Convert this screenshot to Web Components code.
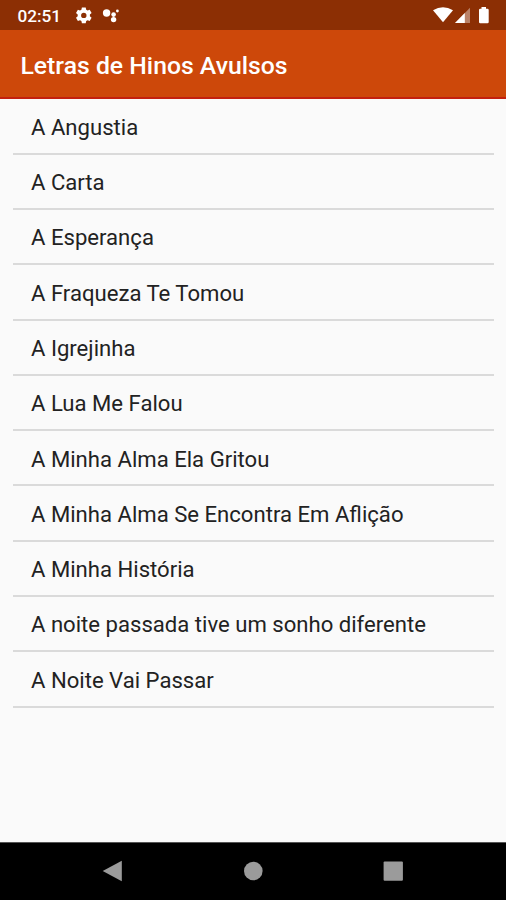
<!DOCTYPE html>
<html lang="pt">
<head>
<meta charset="utf-8">
<title>Letras de Hinos Avulsos</title>
<style>
html, body { margin: 0; height: 100%; }
body { font-family: Roboto, "Liberation Sans", sans-serif; background: #fafafa; overflow: hidden; }
</style>
</head>
<body>
<hymn-app></hymn-app>
<script>
const define = (name, html, setup) => customElements.define(name, class extends HTMLElement {
  constructor() {
    super();
    this.attachShadow({ mode: 'open' }).innerHTML = html;
    if (setup) setup(this.shadowRoot);
  }
});

define('status-bar', `
<style>
:host { display: flex; justify-content: space-between; height: 30px; box-sizing: border-box; background: #8c2f04; color: #fff; }
.group { display: flex; align-items: center; }
.left { padding-left: 17.5px; }
.right { padding-right: 15px; }
time { font-size: 17.2px; line-height: 30px; font-weight: 500; width: 44px; margin-right: 13.5px; white-space: nowrap; padding-top: 2px; }
svg { display: block; fill: #fff; }
</style>
<div class="group left"><time>02:51</time>
<svg width="50" height="30" viewBox="75 0 50 30">
<path fill-rule="evenodd" d="M81.9 7.5h3.8l.5 2.2 1.4.8 2.1-.7 1.9 3.3-1.7 1.5v1.7l1.7 1.5-1.9 3.2-2.1-.7-1.4.8-.5 2.1h-3.8l-.5-2.1-1.4-.8-2.1.7-1.9-3.2 1.7-1.5v-1.7l-1.7-1.5 1.9-3.3 2.1.7 1.4-.8zM83.8 12.7a2.7 2.7 0 1 0 0 5.4 2.7 2.7 0 0 0 0-5.4z"/>
<circle cx="106.6" cy="13" r="3.7"/><circle cx="113.6" cy="14.6" r="2.3"/><circle cx="113.6" cy="19.6" r="2.7"/><circle cx="117.4" cy="11" r="1.4"/>
</svg></div>
<div class="group right"><svg width="60" height="30" viewBox="431 0 60 30">
<path d="M433 10.3Q443 4.2 453 10.3L443 22.3z"/>
<path opacity=".4" d="M470 7.8V23H455z"/><path d="M464.8 13.1V23H455z"/>
<path d="M481.5 7h4.5v1.8h1.5q1.2 0 1.2 1.2v12q0 1.3-1.2 1.3h-7.3q-1.2 0-1.2-1.3V10q0-1.2 1.2-1.2h1.3z"/>
</svg></div>`);

define('app-bar', `
<style>
:host { display: flex; align-items: center; height: 69px; box-sizing: border-box; padding: 4px 20.5px 0; background: #cd480a; border-bottom: 2px solid #c3200f; color: #fff; }
h1 { margin: 0; font-size: 24.75px; line-height: 30px; font-weight: 500; white-space: nowrap; }
</style><h1><slot></slot></h1>`);

define('hymn-item', `
<style>
:host { display: flex; align-items: center; height: 55.3px; box-sizing: border-box; border-bottom: 2px solid #dadada; padding: 1.5px 18.5px 0; color: #222; font-size: 22.12px; white-space: nowrap; }
</style><span><slot></slot></span>`);

define('nav-bar', `
<style>
:host { display: flex; justify-content: space-around; align-items: center; height: 58px; box-sizing: border-box; background: #000; border-top: 1px solid #555; padding: 0 43px 2px; }
svg { display: block; fill: #9b9b9b; width: 24px; height: 24px; }
</style>
<svg viewBox="0 0 24 24"><path d="M1.7 12L20.8 1.8V22.2z"/></svg>
<svg viewBox="0 0 24 24"><circle cx="12.3" cy="12" r="9.3"/></svg>
<svg viewBox="0 0 24 24"><rect x="2.6" y="2.5" width="19.3" height="19.3" rx="1"/></svg>`);

define('hymn-app', `
<style>
:host { display: flex; flex-direction: column; height: 900px; background: #fafafa; }
main { flex: 1; padding: .4px 12px 0 12.5px; min-height: 0; }
</style>
<status-bar></status-bar><app-bar>Letras de Hinos Avulsos</app-bar><main></main><nav-bar></nav-bar>`,
root => {
  const main = root.querySelector('main');
  for (const title of ['A Angustia', 'A Carta', 'A Esperança', 'A Fraqueza Te Tomou', 'A Igrejinha', 'A Lua Me Falou', 'A Minha Alma Ela Gritou', 'A Minha Alma Se Encontra Em Aflição', 'A Minha História', 'A noite passada tive um sonho diferente', 'A Noite Vai Passar']) {
    const item = document.createElement('hymn-item');
    item.textContent = title;
    main.append(item);
  }
});
</script>
</body>
</html>
